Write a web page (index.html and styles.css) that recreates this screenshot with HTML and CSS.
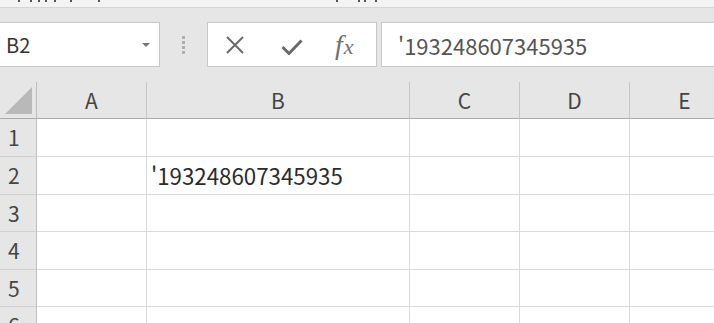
FILE: index.html
```html
<!DOCTYPE html>
<html lang="ja">
<head>
<meta charset="utf-8">
<title>Excel</title>
<link rel="stylesheet" href="styles.css">
</head>
<body>
<div class="app">
  <div class="title-strip">
    <svg class="title-dots" width="714" height="7" viewBox="0 0 714 7">
      <rect x="18" y="0" width="2" height="2"/>
      <rect x="30" y="0" width="2" height="2"/>
      <rect x="38" y="0" width="2" height="2"/>
      <rect x="45" y="0" width="2" height="2"/>
      <rect x="54" y="0" width="2" height="2"/>
      <rect x="70" y="0" width="2" height="2"/>
      <rect x="98" y="0" width="2" height="2"/>
      <rect x="336" y="0" width="2" height="2"/>
      <rect x="358" y="0" width="2" height="2"/>
      <rect x="364" y="0" width="2" height="2"/>
      <rect x="375" y="0" width="2" height="2"/>
    </svg>
  </div>

  <div class="formula-bar">
    <div class="name-box">
      <span class="name-text">B2</span>
      <span class="name-arrow"></span>
    </div>
    <div class="grip">
      <span class="grip-dot"></span>
      <span class="grip-dot"></span>
      <span class="grip-dot"></span>
      <span class="grip-dot"></span>
    </div>
    <div class="fx-buttons">
      <svg class="icon-cancel" width="20" height="20" viewBox="0 0 20 20">
        <path d="M2 2 L18 18 M18 2 L2 18" stroke="#6a6a6a" stroke-width="2" fill="none"/>
      </svg>
      <svg class="icon-enter" width="22" height="16" viewBox="0 0 22 16">
        <path d="M1.5 8 L8 14.5 L20.5 1.5" stroke="#6a6a6a" stroke-width="3" fill="none" stroke-linejoin="miter"/>
      </svg>
      <span class="fx-label"><span class="fx-f">f</span><span class="fx-x">x</span></span>
    </div>
    <div class="formula-input">'193248607345935</div>
  </div>

  <div class="sheet">
    <div class="corner">
      <svg class="corner-tri" width="28" height="28" viewBox="0 0 28 28">
        <polygon points="0,27 27,27 27,0" fill="#b9b9b9"/>
      </svg>
    </div>
    <div class="col-head">A</div>
    <div class="col-head">B</div>
    <div class="col-head">C</div>
    <div class="col-head">D</div>
    <div class="col-head">E</div>

    <div class="row-head">1</div>
    <div class="cell"></div><div class="cell"></div><div class="cell"></div><div class="cell"></div><div class="cell"></div>

    <div class="row-head">2</div>
    <div class="cell"></div><div class="cell text">'193248607345935</div><div class="cell"></div><div class="cell"></div><div class="cell"></div>

    <div class="row-head">3</div>
    <div class="cell"></div><div class="cell"></div><div class="cell"></div><div class="cell"></div><div class="cell"></div>

    <div class="row-head">4</div>
    <div class="cell"></div><div class="cell"></div><div class="cell"></div><div class="cell"></div><div class="cell"></div>

    <div class="row-head">5</div>
    <div class="cell"></div><div class="cell"></div><div class="cell"></div><div class="cell"></div><div class="cell"></div>

    <div class="row-head">6</div>
    <div class="cell"></div><div class="cell"></div><div class="cell"></div><div class="cell"></div><div class="cell"></div>
  </div>
</div>
</body>
</html>
```

FILE: styles.css
```css
* {
  box-sizing: border-box;
}

html, body {
  margin: 0;
  padding: 0;
  background: #ffffff;
}

body {
  width: 714px;
  height: 323px;
  overflow: hidden;
  font-family: "Noto Sans CJK JP", "Noto Sans", sans-serif;
}

.app {
  display: flex;
  flex-direction: column;
  width: 714px;
  height: 323px;
  overflow: hidden;
}

.title-strip {
  height: 8px;
  background: #f3f3f3;
  border-bottom: 1px solid #d6d6d6;
  flex: none;
}

.title-dots {
  display: block;
  fill: #555555;
}

.formula-bar {
  flex: none;
  height: 74px;
  background: #e6e6e6;
  display: flex;
  align-items: flex-start;
  padding-top: 14px;
}

.name-box {
  width: 160px;
  flex: none;
  height: 45px;
  background: #ffffff;
  border: 1px solid #c8c8c8;
  border-left: none;
  display: flex;
  align-items: center;
  justify-content: space-between;
  padding: 0 9px 0 6px;
}

.name-text {
  font-size: 20px;
  line-height: 1;
  color: #333333;
}

.name-arrow {
  width: 0;
  height: 0;
  border-left: 4px solid transparent;
  border-right: 4px solid transparent;
  border-top: 4px solid #777777;
  margin-top: 1px;
}

.grip {
  width: 47px;
  flex: none;
  height: 45px;
  display: flex;
  flex-direction: column;
  align-items: center;
  justify-content: center;
  gap: 2px;
  padding-right: 1px;
}

.grip-dot {
  width: 3px;
  height: 3px;
  background: #b0b0b0;
}

.fx-buttons {
  width: 170px;
  flex: none;
  height: 45px;
  background: #ffffff;
  border: 1px solid #c8c8c8;
  display: flex;
  align-items: center;
  padding-left: 17px;
}

.icon-cancel {
  display: block;
  width: 20px;
  height: 20px;
  margin-top: 1px;
}

.icon-enter {
  display: block;
  margin-left: 36px;
  margin-top: 4px;
}

.fx-label {
  margin-left: 32px;
  font-family: "Liberation Serif", "DejaVu Serif", serif;
  font-style: italic;
  line-height: 1;
  color: #707070;
  display: flex;
  align-items: baseline;
}

.fx-f {
  font-size: 28px;
}

.fx-x {
  font-size: 22px;
  margin-left: 1px;
}

.formula-input {
  flex: 1;
  height: 45px;
  margin-left: 4px;
  margin-right: -2px;
  background: #ffffff;
  border: 1px solid #c8c8c8;
  display: flex;
  align-items: center;
  padding-left: 16px;
  font-size: 22px;
  line-height: 1;
  color: #555555;
}

.sheet {
  flex: 1;
  display: grid;
  grid-template-columns: 37px 110px 263px 110px 110px 110px;
  grid-template-rows: 37px 38px 38px 37px 38px 37px 38px;
  background: #ffffff;
  overflow: hidden;
}

.corner {
  background: #e6e6e6;
  border-right: 1px solid #bdbdbd;
  border-bottom: 1px solid #ababab;
  display: flex;
  align-items: flex-end;
  justify-content: flex-end;
  padding: 0 3px 3px 0;
}

.corner-tri {
  display: block;
}

.col-head {
  background: #e6e6e6;
  border-right: 1px solid #c6c6c6;
  border-bottom: 1px solid #ababab;
  display: flex;
  align-items: center;
  justify-content: center;
  font-size: 21px;
  line-height: 1;
  color: #444444;
}

.row-head {
  background: #e6e6e6;
  border-right: 1px solid #bdbdbd;
  border-bottom: 1px solid #cfcfcf;
  display: flex;
  align-items: center;
  padding-left: 8px;
  font-size: 21px;
  line-height: 1;
  color: #444444;
}

.cell {
  border-right: 1px solid #dadada;
  border-bottom: 1px solid #dadada;
}

.cell.text {
  display: flex;
  align-items: center;
  padding-left: 4px;
  font-size: 22.3px;
  line-height: 1;
  color: #2b2b2b;
  white-space: nowrap;
}
```
